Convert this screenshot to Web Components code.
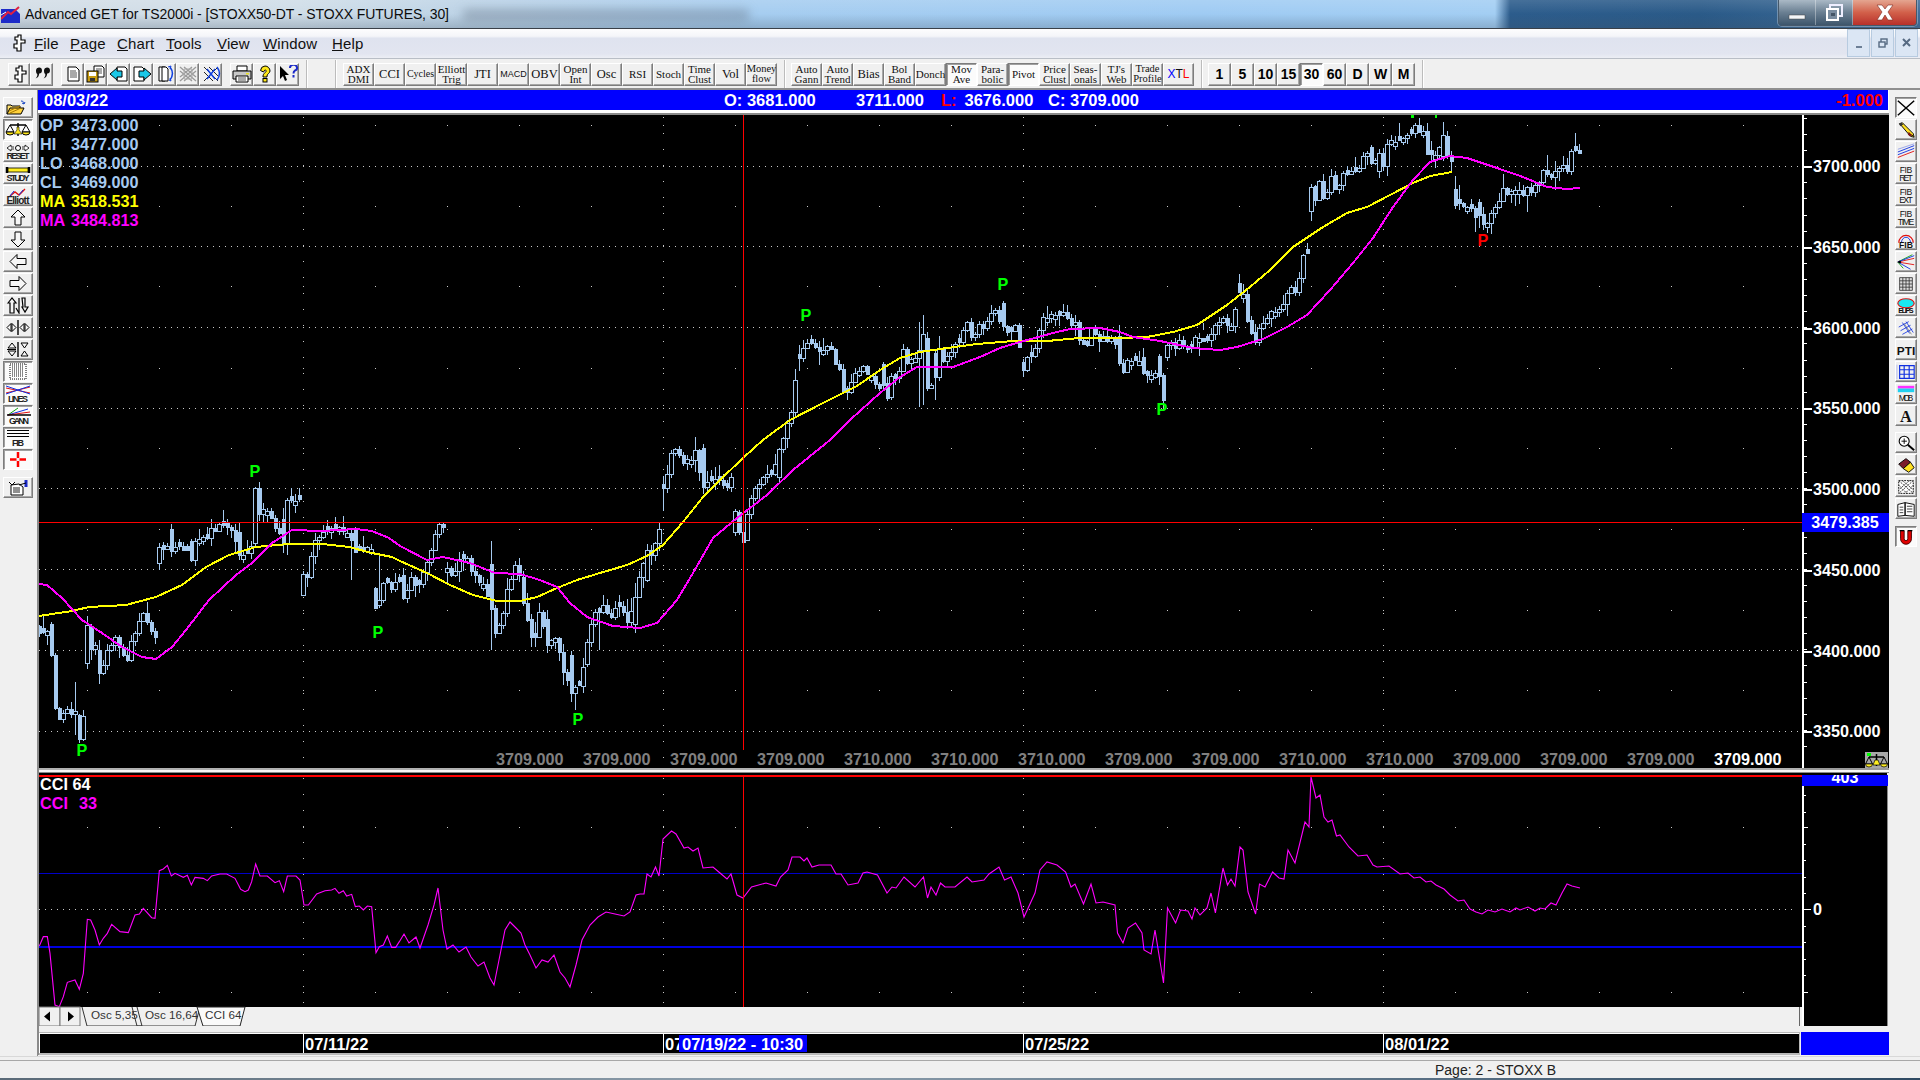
<![CDATA[<!DOCTYPE html>
<html><head><meta charset="utf-8"><title>Advanced GET</title>
<style>
html,body{margin:0;padding:0;background:#f0f0f0}
body{width:1920px;height:1080px;overflow:hidden;font-family:"Liberation Sans",Arial,sans-serif}
</style></head><body>
<app-window>
  <title-bar slot="top">Advanced GET for TS2000i - [STOXX50-DT - STOXX FUTURES, 30]</title-bar>
  <menu-bar slot="top"></menu-bar>
  <top-toolbar slot="top"></top-toolbar>
  <side-bar slot="left" side="left"></side-bar>
  <quote-header slot="center"></quote-header>
  <price-chart slot="center"></price-chart>
  <osc-chart slot="center"></osc-chart>
  <date-bar slot="center"></date-bar>
  <side-bar slot="right" side="right"></side-bar>
  <status-bar slot="bottom">Page: 2 - STOXX B</status-bar>
</app-window>
<script>
const S=(b,w=24,h=18)=>`<svg xmlns="http://www.w3.org/2000/svg" width="${w}" height="${h}" viewBox="0 0 ${w} ${h}" style="display:block;font-family:'Liberation Sans',sans-serif">${b}</svg>`;
const APPSHAPE='<path d="M10 1h3v5h4v3h-4v8h-4v-3H6v-4h3V6H7V3h3z" fill="#fff" stroke="#000" stroke-width="1.2"/>';
class AppWindow extends HTMLElement{constructor(){super();this.attachShadow({mode:'open'}).innerHTML=`<style>
:host{display:flex;flex-direction:column;width:1920px;height:1080px;background:#f0f0f0}
.mid{display:flex;height:966px;flex:none}
.l{width:37px;flex:none;border-right:1px solid #8a8a8a}
.c{width:1851px;flex:none;display:flex;flex-direction:column}
.r{flex:1}
.edge{height:2px;background:linear-gradient(90deg,#5a6a78,#8fa0ae 40%,#2f4a63)}
</style><slot name="top"></slot><div class="mid"><div class="l"><slot name="left"></slot></div><div class="c"><slot name="center"></slot></div><div class="r"><slot name="right"></slot></div></div><slot name="bottom"></slot><div class="edge"></div>`}}
class TitleBar extends HTMLElement{constructor(){super();this.attachShadow({mode:'open'}).innerHTML=`<style>
:host{display:flex;align-items:center;height:28px;border-bottom:1px solid #3a4048;position:relative;overflow:hidden;
background:linear-gradient(180deg,rgba(255,255,255,.12),rgba(255,255,255,0) 50%,rgba(60,80,100,.25) 100%),linear-gradient(90deg,#d3dde6 0,#cfdde8 300px,#bdd3e6 460px,#a6cdf0 760px,#9fcbf3 1200px,#a3cef3 1495px,#2c5c8c 1510px,#2a5a88 1700px,#3f6d9a 1920px)}
.smudge{position:absolute;left:462px;top:9px;width:288px;height:12px;background:rgba(105,120,135,.42);filter:blur(5px);border-radius:6px}
.logo{margin:0 4px 0 1px;flex:none}
.t{font:14px "Liberation Sans",sans-serif;color:#0c0c0c;white-space:nowrap;letter-spacing:-.1px;position:relative}
.ctl{position:absolute;right:3px;top:0;height:25px;display:flex;border:1px solid #46596b;border-top:0;border-radius:0 0 4px 4px;overflow:hidden;box-shadow:0 0 0 1px rgba(255,255,255,.3)}
.ctl div{display:flex;align-items:center;justify-content:center;border-right:1px solid rgba(255,255,255,.35)}
.mn,.mx{width:36px;background:linear-gradient(180deg,#aab9c6,#6a7f92 50%,#3e566c)}
.cl{width:63px;background:linear-gradient(180deg,#e4a590,#d2604a 50%,#b8302a);border-right:0!important}
</style><div class="smudge"></div>
<div class="logo">${S('<path d="M0 4h14l5 5v9H0z" fill="#1c2ac8"/><path d="M0 14L7 7l3 2 8-7" fill="none" stroke="#e02040" stroke-width="2"/><path d="M0 10l5-3" stroke="#fff"/>',20,18)}</div>
<div class="t"><slot></slot></div>
<div class="ctl"><div class="mn">${S('<rect x="2" y="11" width="16" height="4" fill="#f4f6f8" stroke="#444" stroke-width=".5"/>',20,18)}</div>
<div class="mx">${S('<rect x="6" y="2" width="12" height="11" fill="none" stroke="#eef" stroke-width="2"/><rect x="3" y="6" width="11" height="11" fill="#7a8da0" stroke="#fff" stroke-width="2"/><rect x="7" y="10" width="4" height="3" fill="#456"/>',20,20)}</div>
<div class="cl">${S('<path d="M3 2h5l3 4 3-4h5l-5 7 5 8h-5l-3-5-3 5H3l5-8z" fill="#fff" stroke="#7a2a20" stroke-width=".6"/>',22,20)}</div></div>`}}
class MenuBar extends HTMLElement{constructor(){super();
const items=[['F','ile',34],['P','age',70],['C','hart',117],['T','ools',166],['V','iew',217],['W','indow',263],['H','elp',332]];
const h=`<style>
:host{display:flex;align-items:center;height:28px;padding-bottom:1px;border-bottom:1px solid #b9bec6;position:relative;background:linear-gradient(180deg,#fdfdfe 0,#f4f5f9 25%,#dfe3ef 32%,#e2e5f0 85%,#eceef4)}
.i{font:15px "Liberation Sans",sans-serif;color:#111;letter-spacing:.15px;position:absolute;top:6px}
u{text-decoration-thickness:1px}
.logo{margin-left:8px}
.mdi{margin-left:auto;margin-right:2px;display:flex;gap:1px}
.mdi div{width:21px;height:26px;background:#dbe6f4;border:1px solid #b7cbe0;display:flex;align-items:center;justify-content:center}
</style><div class="logo">${S(APPSHAPE,22,18)}</div>
${items.map(([a,b,x])=>`<span class="i" style="left:${x}px"><u>${a}</u>${b}</span>`).join('')}
<div class="mdi"><div>${S('<rect x="3" y="10" width="6" height="2" fill="#6c7f96"/>',12,14)}</div>
<div>${S('<rect x="4" y="3" width="6" height="5" fill="none" stroke="#566a82" stroke-width="1.4"/><rect x="2" y="6" width="6" height="5" fill="#dbe6f4" stroke="#566a82" stroke-width="1.4"/>',12,14)}</div>
<div>${S('<path d="M2 3l7 7M9 3l-7 7" stroke="#566a82" stroke-width="2"/>',12,14)}</div></div>`;
this.attachShadow({mode:'open'}).innerHTML=h}}
class ToolBtn extends HTMLElement{constructor(){super();this.attachShadow({mode:'open'}).innerHTML=`<style>
:host{display:flex;box-sizing:border-box;align-items:center;justify-content:center;overflow:hidden;flex:none;
background:#f0f0f0;border:1px solid;border-color:#fff #7d7d7d #7d7d7d #fff;box-shadow:inset -1px -1px 0 #a8a8a8;
font:11px/10.5px "Liberation Serif",serif;color:#111;text-align:center;white-space:pre-line}
:host([pressed]){border-color:#7d7d7d #fff #fff #7d7d7d;box-shadow:inset 1px 1px 0 #a0a0a0;background:#fbfbfb}
:host([num]){font:bold 14px "Liberation Sans",sans-serif;color:#000}
</style><slot></slot>`}}
class TopToolbar extends HTMLElement{constructor(){super();
const i={
a:S(APPSHAPE,20,18),
q:S('<path d="M4 5a3 3 0 1 1 3.2 3.4C7 11 6 12.500 3.500 13.500 5 12 5.500 10.500 5.300 9 4.300 8.800 4 7 4 5zM12 5a3 3 0 1 1 3.200 3.400C15 11 14 12.500 11.500 13.500 13 12 13.500 10.500 13.300 9 12.300 8.800 12 7 12 5z" fill="#111"/>',20,18),
n:S('<path d="M5 2h8l3 3v11H5z" fill="#fff" stroke="#000"/><path d="M7 6h6M7 8h7M7 10h7M7 12h7" stroke="#555"/>',20,18),
s:S('<path d="M8 1h8l2 2v9H8z" fill="#fff" stroke="#000"/><path d="M10 4h6M10 6h6M10 8h6" stroke="#555"/><rect x="1" y="6" width="11" height="11" fill="#c69a10" stroke="#000"/><rect x="3" y="7" width="7" height="4" fill="#fff"/><rect x="4" y="13" width="5" height="3" fill="#333"/>',20,18),
l:S('<path d="M8 2h8l2 2v12H8z" fill="#fff" stroke="#000"/><path d="M1 9l7-6v3h5v6H8v3z" fill="#19c8e8" stroke="#000"/>',20,18),
r:S('<path d="M2 2h8l2 2v12H2z" fill="#fff" stroke="#000"/><path d="M19 9l-7-6v3H7v6h5v3z" fill="#19c8e8" stroke="#000"/>',20,18),
c:S('<path d="M4 2h6v14H4z" fill="#fff" stroke="#000"/><path d="M7 2h4l2 2v12H7z" fill="#fff" stroke="#000"/><path d="M15 2c3 4 3 9 0 13" fill="none" stroke="#1040e0" stroke-width="1.500"/><path d="M13 2l3-1-1 3M14 15l2 1-1-3" stroke="#1040e0" fill="none"/>',20,18),
g:S('<path d="M2 2l16 14M18 2L2 16M2 6l12 10M6 2l12 10M18 6L6 16M14 2L2 12" stroke="#9a9a9a" stroke-width="1.300"/><path d="M6 4h8v10H6z" fill="none" stroke="#aaa"/>',20,18),
x:S('<path d="M3 2l14 14M17 2L3 16M3 7l9 9M8 2l9 9" stroke="#222" stroke-width="1"/><path d="M16 2c3 4 3 9 0 13M6 4l8 10M14 4L6 14" fill="none" stroke="#1040e0" stroke-width="1.500"/>',20,18),
p:S('<path d="M5 1h10v5H5z" fill="#fff" stroke="#000"/><path d="M1 6h18v8H1z" fill="#c8c8c8" stroke="#000"/><path d="M4 11h12v6H4z" fill="#fff" stroke="#000"/><path d="M6 13h8M6 15h8" stroke="#555"/><rect x="14" y="8" width="3" height="1.500" fill="#e8e020"/>',20,18),
h:S('<path d="M10 1a5 5 0 0 1 5 5c0 2-3 3-3 5v1H8v-1c0-2 2-3 3-4.500 .6-1-.4-1.800-1.300-1.300L8.500 7 5.500 5.500A5 5 0 0 1 10 1z" fill="#ffe81a" stroke="#000"/><rect x="8" y="13.500" width="4" height="3.500" fill="#ffe81a" stroke="#000"/>',20,18),
w:S('<path d="M2 1v13l3-3 2 5 2-1-2-5h4z" fill="#000"/><path d="M12 3a3.500 3 0 1 1 5 2.500c-1.500 1-1.500 1.500-1.500 3M15.500 10v2.500" fill="none" stroke="#1c2ac8" stroke-width="2"/>',20,18)};
const g2=['n','s','l','r','c','g','x'],g3=['p','h','w'];
const st=['ADX\nDMI','CCI','Cycles','Elliott\nTrig','JTI','MACD','OBV','Open\nInt','Osc','RSI','Stoch','Time\nClust','Vol','Money\nflow'];
const st2=['Auto\nGann','Auto\nTrend','Bias','Bol\nBand','Donch','Mov\nAve','Para-\nbolic','Pivot','Price\nClust','Seas-\nonals',"TJ's\nWeb",'Trade\nProfile','XTL'];
const per=['1','5','10','15','30','60','D','W','M'];
const sb=(t,extra='')=>`<tool-btn ${extra} style="width:31px;height:23px;${t==='CCI'||t==='JTI'||t==='OBV'||t==='Osc'||t==='Vol'||t==='Bias'?'font-size:12.5px;':''}${t==='MACD'?'font-size:9px;font-family:Liberation Sans,sans-serif;':''}${t==='Cycles'?'font-size:10px;':''}${t==='Money\nflow'||t==='Trade\nProfile'?'font-size:10.5px;':''}">${t==='XTL'?'<span style="font:12px Liberation Sans,sans-serif"><span style="color:#00f">X</span>T<span style="color:#f00">L</span></span>':t}</tool-btn>`;
const ib=(k,w=23)=>`<tool-btn style="width:${w}px;height:23px">${i[k]}</tool-btn>`;
this.attachShadow({mode:'open'}).innerHTML=`<style>
:host{display:flex;align-items:flex-start;padding-top:4px;box-sizing:border-box;background:#f0f0f0;border-bottom:2px solid #8f8f8f;height:32px;padding-left:8px}
.g{display:flex}
.sep{width:1px;height:28px;margin-top:-3px;background:#bcbcbc;box-shadow:1px 0 0 #fff;flex:none}
</style>
<div class="g">${ib('a',22)}${ib('q',23)}</div><div style="width:8px"></div>
<div class="g">${g2.map(k=>ib(k)).join('')}</div><div style="width:8px"></div>
<div class="g">${g3.map(k=>ib(k)).join('')}</div><div style="width:7px"></div><div class="sep"></div><div style="width:28px"></div><div class="sep"></div><div style="width:7px"></div>
<div class="g">${st.map(t=>sb(t)).join('')}</div><div style="width:7px"></div><div class="sep"></div><div style="width:6px"></div>
<div class="g">${st2.map(t=>sb(t,(t==='Mov\nAve'||t==='Pivot')?'pressed':'')).join('')}</div><div style="width:7px"></div><div class="sep"></div><div style="width:6px"></div>
<div class="g">${per.map(t=>`<tool-btn num ${t==='30'?'pressed':''} style="width:23px;height:23px">${t}</tool-btn>`).join('')}</div><div style="width:7px"></div><div class="sep"></div>`}}
const LI={
open:S('<path d="M2 15V6h4l1 1h8v3" fill="#ffe070" stroke="#000"/><path d="M2 15l3-6h14l-3 6z" fill="#ffd23c" stroke="#000"/><path d="M4 12l11-5M5 14l11-5" stroke="#a87800"/><path d="M16 2c2 0 3 1 3 3M19 5l-2-1M19 5l1-2" stroke="#1040c0" fill="none"/>',26,17),
scales:S('<path d="M13 2v13M5 4h16" stroke="#000" stroke-width="1.400"/><path d="M9 13h8l-3-4v-3h-2v3z" fill="#ffe81a" stroke="#000" stroke-width=".6"/><path d="M5 4l-4 7h8zM21 4l-4 7h8z" fill="none" stroke="#000"/><path d="M1 11a4 3 0 0 0 8 0zM17 11a4 3 0 0 0 8 0z" fill="#ffe81a" stroke="#000"/>',26,17),
reset:S('<path d="M2 5l4-3v2h3M2 5l4 3V6h3M24 5l-4-3v2h-3M24 5l-4 3V6h-3" fill="#fff" stroke="#000" stroke-width=".8"/><circle cx="13" cy="5" r="2.500" fill="#fff" stroke="#000"/><text x="13" y="16" font-size="9" font-weight="bold" text-anchor="middle" fill="#222" textLength="23">RESET</text>',26,17),
study:S('<path d="M2 2v6M24 2v6" stroke="#000" stroke-width="2.500"/><rect x="3" y="3" width="20" height="4" fill="#ffee20" stroke="#000" stroke-width=".8"/><text x="13" y="16" font-size="9" font-weight="bold" text-anchor="middle" fill="#222" textLength="23">STUDY</text>',26,17),
elliott:S('<path d="M5 9l5-4 4 3 6-6" fill="none" stroke="#e01010" stroke-width="1.400"/><path d="M5 9l4-5M14 8l4-5" stroke="#1030e0"/><text x="13" y="16.500" font-size="10" font-weight="bold" text-anchor="middle" fill="#222" textLength="23">Elliott</text>',26,17),
up:S('<path d="M13 1l7 7h-4v8h-6V8H6z" fill="#f6f6f6" stroke="#000"/>',26,17),
down:S('<path d="M13 16l7-7h-4V1h-6v8H6z" fill="#f6f6f6" stroke="#000"/>',26,17),
left:S('<path d="M5 8.500l7-7v4h9v6h-9v4z" fill="#f6f6f6" stroke="#000"/>',26,17),
right:S('<path d="M21 8.500l-7-7v4H5v6h9v4z" fill="#f6f6f6" stroke="#000"/>',26,17),
flip:S('<path d="M3 6l4-5 4 5H9v10H5V6z" fill="#f6f6f6" stroke="#000" stroke-width="1.200"/><path d="M11 11l3 5V1" fill="none" stroke="#000" stroke-width="1.200"/><path d="M17 1h3v9h3l-3 5-3-5h1z" fill="none" stroke="#000" stroke-width="1.200"/>',26,17),
zoomx:S('<path d="M13 1v15" stroke="#000" stroke-width="1.400"/><path d="M2 8.500l4-4v8zM11 8.500l-4-4v8zM15 8.500l4-4v8zM24 8.500l-4-4v8z" fill="#f6f6f6" stroke="#000"/>',26,17),
zoomy:S('<path d="M13 1v15" stroke="#000" stroke-width="1.400"/><path d="M3 7l4-5 4 5zM3 10l4 5 4-5z" fill="#f6f6f6" stroke="#000"/><path d="M16 2h7l-3.500 5zM16 15h7l-3.500-5z" fill="#f6f6f6" stroke="#000"/><path d="M2 8.500h9" stroke="#000"/>',26,17),
grid:S('<rect x="5" y="1" width="16" height="15" fill="#fff" stroke="#000" stroke-dasharray="1 1"/><path d="M7 3h12M7 5h12M7 7h12M7 9h12M7 11h12M7 13h12" stroke="#111" stroke-dasharray="1 1"/>',26,17),
lines:S('<path d="M1 3l24 5M1 8l24-6" stroke="#e01010" stroke-width="1"/><path d="M1 1l24 8M1 9l24-8" stroke="#1030e0"/><text x="13" y="16.500" font-size="9" font-weight="bold" text-anchor="middle" fill="#222" textLength="20">LINES</text>',26,17),
gann:S('<path d="M3 8L13 1" stroke="#10a010"/><path d="M3 8l20-6" stroke="#1030e0"/><path d="M3 8l22-3" stroke="#e01010"/><path d="M2 8h24" stroke="#000" stroke-width="1.500"/><text x="14" y="16.500" font-size="9" font-weight="bold" text-anchor="middle" fill="#222" textLength="20">GANN</text>',26,17),
fib:S('<path d="M2 1.500h22M2 4.500h22M2 7.500h22" stroke="#000" stroke-width="1.200"/><text x="13" y="16.500" font-size="9" font-weight="bold" text-anchor="middle" fill="#222" textLength="12">FIB</text>',26,17),
cross:S('<path d="M13 1v15M5 8.500h16" stroke="#f00" stroke-width="2.500"/><rect x="11.500" y="7" width="3" height="3" fill="#f0f0f0"/>',26,17),
doc:S('<path d="M6 6l8-1 4 3v8H6z" fill="#fff" stroke="#000"/><path d="M8 9h7M8 11h7M8 13h7" stroke="#222"/><path d="M4 3l3 3 3-3" fill="#fff" stroke="#000"/><path d="M21 1v7" stroke="#1c2ac8" stroke-width="3"/><path d="M14 6l7-2" stroke="#000"/>',26,17),
xx:S('<path d="M2 1l18 16M20 1L2 17" stroke="#000" stroke-width="1.600"/>',22,18),
pencil:S('<path d="M4 2l3-1 12 12 1 4-4-1z" fill="#ffe020" stroke="#000"/><path d="M3 2l3-1 2 2-3 2z" fill="#333"/><path d="M17 14l2 2" stroke="#000"/><path d="M14 11l4 4-3 1-2-2z" fill="#7a1a1a"/>',22,18),
rl:S('<path d="M2 9L20 2M2 12L20 5" stroke="#1030e0"/><path d="M2 15L20 8" stroke="#e01010"/><path d="M2 6L20 0" stroke="#1030e0" opacity=".4"/>',22,18),
fibret:S('<text x="11" y="8" font-size="9.5" text-anchor="middle" fill="#111" textLength="14">FIB</text><text x="11" y="17" font-size="9.5" text-anchor="middle" fill="#111" textLength="15">RET</text>',22,18),
fibext:S('<text x="11" y="8" font-size="9.5" text-anchor="middle" fill="#111" textLength="14">FIB</text><text x="11" y="17" font-size="9.5" text-anchor="middle" fill="#111" textLength="15">EXT</text>',22,18),
fibtime:S('<text x="11" y="8" font-size="9.5" text-anchor="middle" fill="#111" textLength="14">FIB</text><text x="11" y="17" font-size="9.5" text-anchor="middle" fill="#111" textLength="18">TIME</text>',22,18),
arc:S('<path d="M3 12a8 8 0 0 1 16 0" fill="none" stroke="#e01010" stroke-width="1.300"/><path d="M6 12a5 6 0 0 1 10 0" fill="none" stroke="#1030e0"/><text x="11" y="17.500" font-size="9.500" font-weight="bold" text-anchor="middle" fill="#111">FIB</text>',22,18),
fan:S('<path d="M2 9L18 1" stroke="#10a010"/><path d="M2 9L20 5M2 9L20 12" stroke="#e01010"/><path d="M2 9L16 17M2 9L20 2" stroke="#1030e0"/><path d="M2 9l6 7" stroke="#10a010"/><circle cx="4" cy="9" r="1.500" fill="#000"/>',22,18),
gridR:S('<path d="M4 2h14v14H4zM4 5.500h14M4 9h14M4 12.500h14M7.500 2v14M11 2v14M14.500 2v14" fill="#ddd" stroke="#333" stroke-width=".9"/>',22,18),
elips:S('<ellipse cx="11" cy="6" rx="9" ry="5" fill="#18e8f0" stroke="#e01010" stroke-width="1.200"/><text x="11" y="17" font-size="8" font-weight="bold" text-anchor="middle" fill="#111" textLength="17">ELIPS</text>',22,18),
cl:S('<path d="M3 8L14 2M5 12L16 6M7 16L18 10M7 3l8 12M11 2l8 12" stroke="#1030e0" stroke-width=".9"/><path d="M9 4l8 12" stroke="#666" stroke-width=".7"/>',22,18),
pti:S('<text x="11" y="14" font-size="13" font-weight="bold" text-anchor="middle" fill="#111">PTI</text>',22,18),
blue:S('<path d="M4 2h16v14H4zM4 6.500h16M4 11.500h16M9 2v14M14.500 2v14" fill="none" stroke="#1030e0" stroke-width="1.300"/><path d="M1 1v16" stroke="#1030e0" opacity=".3"/>',22,18),
mob:S('<rect x="2" y="0" width="18" height="3" fill="#ff30ff"/><rect x="2" y="3" width="18" height="4" fill="#20d0f0"/><text x="11" y="17" font-size="9.500" text-anchor="middle" fill="#111" textLength="16">MOB</text>',22,18),
A:`<svg width="22" height="18" viewBox="0 0 22 18" style="display:block"><text x="11" y="16" font-size="18" font-weight="bold" font-family="Liberation Serif,serif" text-anchor="middle" fill="#111">A</text></svg>`,
zoom:S('<circle cx="9" cy="7" r="5.500" fill="#fff" stroke="#000" stroke-width="1.200"/><path d="M9 4v6M6 7h6" stroke="#000"/><path d="M13 11l7 6" stroke="#000" stroke-width="2.200"/>',22,18),
eraser:S('<path d="M3 8l8-6 5 4-8 7z" fill="#7a1a2a" stroke="#000"/><path d="M8 13l8-7 4 6-6 5z" fill="#ffe020" stroke="#000"/>',22,18),
pat:S('<rect x="3" y="2" width="16" height="14" fill="#fff" stroke="#000" stroke-dasharray="2 1"/><path d="M3 2l16 14M19 2L3 16M7 2l12 10M15 2L3 12M3 7l9 9M19 7l-9 9" stroke="#333" stroke-dasharray="2 1"/>',22,18),
rdoc:S('<path d="M2 4l8-2v14l-8 1zM10 2l10 2v13l-10-1z" fill="#fff" stroke="#000"/><path d="M4 7h4M4 10h4M4 13h4M12 6h6M12 9h6M12 12h6" stroke="#333"/>',22,18),
U:S('<path d="M5 2v9a6 6 0 0 0 12 0V2h-4v9a2 2 0 0 1-4 0V2z" fill="#e00000" stroke="#400"/><path d="M4 2h5M13 2h5" stroke="#000" stroke-width="1.500"/>',22,18)};
class SideBar extends HTMLElement{constructor(){super();
const left=[['open'],['scales',1],['reset'],['study'],['elliott'],['up'],['down'],['left'],['right'],['flip'],['zoomx'],['zoomy'],['grid',1],['lines',1],['gann',1],['fib',1],['cross',1],['doc',0,6]];
const right=[['xx',1],['pencil'],['rl'],['fibret'],['fibext'],['fibtime'],['arc'],['fan'],['gridR'],['elips'],['cl'],['pti'],['blue'],['mob'],['A'],['zoom',0,5],['eraser'],['pat'],['rdoc'],['U',1,6]];
const isL=this.getAttribute('side')==='left';
const list=isL?left:right;
this.attachShadow({mode:'open'}).innerHTML=`<style>
:host{display:flex;flex-direction:column;gap:1px;padding-top:7px;padding-left:${isL?3:6}px}
</style>${list.map(([k,p,m])=>`<tool-btn ${p?'pressed':''} style="width:${isL?30:22}px;height:21px;${m?`margin-top:${m}px`:''}">${LI[k]}</tool-btn>`).join('')}`}}
class QuoteHeader extends HTMLElement{constructor(){super();this.attachShadow({mode:'open'}).innerHTML=`<style>
:host{display:flex;align-items:flex-start;box-sizing:border-box;height:25px;border-bottom:2px solid #8a8a8a;background:#fff;flex:none;font:bold 16.5px "Liberation Sans",sans-serif;color:#fff}
.b{display:flex;align-items:center;background:#00f;height:20px;width:1850px;white-space:nowrap;padding-top:1px;box-sizing:border-box}
span{flex:none}
.red{color:#f00}
</style><div class="b"><span style="width:686px;padding-left:6px;box-sizing:border-box">08/03/22</span><span style="width:132px">O: 3681.000</span><span style="width:85px">3711.000</span><span class="red" style="width:23.500px">L:</span><span style="width:83.500px">3676.000</span><span style="width:1px;flex:1">C: 3709.000</span><span class="red" style="padding-right:5px">-1.000</span></div>`}}
/* ---------- data in page coordinates ---------- */
const PX=[[39,630],[46,627],[51,650],[55,707],[60,720],[67,710],[76,713],[81,737],[87,627,1],[92,627],[95,647],[99,672],[104,660],[109,647],[115,640],[121,655],[127,658],[132,640],[137,627],[144,615],[147,618],[152,633],[156,635],[159,557,1],[164,543],[171,550],[179,543],[184,548],[191,558],[196,540],[202,540],[211,530],[219,525],[226,523],[232,528],[239,553],[244,560],[251,545],[256,488,1],[259,513],[266,510],[271,520],[276,527],[284,543],[287,500,1],[292,497],[299,500],[303,593,1],[307,573],[311,557],[316,537],[322,530],[332,527],[339,530],[347,533],[356,550],[364,553],[371,547],[376,608,1],[381,593],[386,577],[391,587],[399,578],[403,597],[410,580],[417,587],[423,573],[430,553],[435,535],[442,520],[447,565,1],[452,582],[458,555],[468,555],[472,575],[480,580],[492,608],[497,632],[503,615],[508,582],[515,568],[522,577],[523,603],[527,620],[532,637],[537,637],[539,615],[547,643],[555,637],[560,660],[563,673],[572,693],[578,688],[583,667],[588,643],[592,618],[598,612],[603,602],[610,617],[615,608],[620,605],[628,622],[635,597],[639,577],[647,552],[652,553],[658,537],[663,487,1],[667,473],[671,453],[678,450],[685,465],[695,450],[703,487],[712,475],[720,483],[728,490],[732,475],[737,532,1],[745,540],[748,515],[752,498],[757,487],[763,480],[770,477],[780,450],[783,440],[788,415],[792,410],[796,370,1],[802,350],[808,337],[815,350],[825,345],[833,355],[840,372],[845,398],[852,380],[863,367],[872,380],[882,392],[888,398],[892,377],[897,377],[903,350],[908,365],[917,353],[923,338],[928,388],[935,377],[940,347],[943,362],[952,352],[960,338],[967,325],[972,335],[980,325],[983,330],[988,317],[995,313],[1003,325],[1008,330],[1015,323],[1018,343],[1023,370,1],[1027,360],[1032,352],[1037,342],[1040,322],[1045,315],[1053,312],[1063,315],[1072,327],[1076,325],[1080,342],[1087,345],[1092,322],[1097,340],[1107,338],[1113,338],[1118,362],[1123,368],[1128,358],[1138,357],[1145,372],[1152,373],[1158,375],[1163,400],[1167,345,1],[1172,340],[1175,352],[1180,342],[1190,347],[1195,338],[1202,343],[1208,340],[1215,328],[1222,312],[1227,322],[1233,322],[1238,283,1],[1243,291],[1247,320],[1252,333],[1257,342],[1260,322],[1267,320],[1272,312],[1280,310],[1286,290],[1291,290],[1295,293],[1300,273],[1303,252],[1307,250],[1312,187,1],[1315,198],[1320,182],[1323,197],[1328,194],[1332,175],[1337,190],[1343,175],[1352,170],[1357,172],[1363,158],[1367,150],[1372,163],[1378,163],[1384,170],[1387,143],[1392,138],[1397,145],[1403,137],[1410,138],[1415,127],[1423,135],[1428,160],[1433,153],[1438,152],[1443,137],[1448,157],[1452,157],[1455,205,1],[1460,200],[1467,207],[1475,215],[1480,223],[1485,222],[1490,215],[1498,200],[1503,192],[1508,198],[1515,188],[1519,188],[1523,195],[1528,187],[1532,195],[1536,183],[1543,173],[1552,173],[1558,175],[1562,163],[1567,167],[1570,150],[1575,149],[1580,152]];
/* explicit big bodies read from the reference: x:[top,bottom,filled] */
const OV={51:[624,655,1],55:[655,708,1],79:[715,739,1],83:[716,739,0],87:[625,663,0],91:[627,649,1],99:[650,673,1],159:[547,563,0],171:[529,551,1],191:[541,560,1],239:[532,555,1],255:[488,543,0],259:[488,514,1],283:[519,543,1],287:[500,544,0],303:[574,595,0],355:[530,552,1],375:[588,608,1],403:[575,598,1],491:[564,609,1],495:[608,633,1],523:[577,603,1],527:[603,620,1],531:[619,637,1],547:[619,645,1],571:[655,693,1],583:[667,686,0],587:[642,664,0],635:[597,624,0],639:[577,597,0],647:[550,580,0],703:[448,487,1],735:[511,532,0],739:[512,532,1],747:[514,540,0],751:[498,514,0],779:[449,477,0],883:[364,385,1],887:[383,398,1],891:[376,397,0],927:[338,388,1],935:[353,377,1],1003:[303,326,1],1023:[362,370,1],1119:[336,363,1],1143:[357,373,1],1159:[356,376,1],1163:[375,400,1],1167:[345,357,0],1239:[283,292,1],1247:[294,321,1],1251:[320,333,1],1255:[332,342,1],1285:[288,312,0],1311:[187,211,0],1315:[186,200,1],1335:[175,189,1],1371:[147,163,1],1379:[153,171,0],1429:[135,161,1],1443:[135,156,0],1447:[136,156,1],1455:[189,205,1],1479:[202,215,1],1483:[214,224,1]};
const YEL=[[39,616],[72,611],[89,607],[126,605],[156,597],[182,585],[206,567],[229,555],[256,547],[289,544],[322,544],[349,547],[372,553],[392,557],[400,561],[427,573],[450,585],[473,595],[497,601],[520,601],[537,597],[557,588],[577,580],[600,573],[627,565],[647,556],[663,545],[683,522],[703,497],[720,480],[743,458],[763,440],[790,420],[825,402],[857,386],[880,370],[900,358],[920,352],[947,348],[977,344],[1013,341],[1047,341],[1080,338],[1120,338],[1147,337],[1173,332],[1197,325],[1227,305],[1250,287],[1270,270],[1293,247],[1323,227],[1347,213],[1367,207],[1390,195],[1413,183],[1430,176],[1452,172]];
const MAG=[[39,584],[47,585],[62,598],[82,620],[102,633],[122,647],[142,657],[156,659],[172,647],[186,630],[209,600],[236,575],[252,563],[272,543],[292,530],[322,531],[356,529],[372,531],[389,538],[400,546],[427,560],[443,557],[470,563],[495,573],[520,574],[540,580],[557,587],[570,603],[587,617],[613,626],[640,628],[657,623],[677,600],[693,573],[713,538],[737,518],[767,495],[793,470],[830,440],[850,420],[880,393],[900,377],[917,367],[953,367],[980,357],[1000,348],[1020,342],[1053,333],[1070,329],[1100,328],[1120,332],[1133,337],[1160,341],[1193,348],[1220,350],[1237,347],[1263,339],[1287,327],[1307,315],[1330,290],[1353,263],[1373,238],[1393,207],[1413,180],[1430,162],[1450,156],[1467,158],[1497,168],[1523,177],[1547,187],[1567,189],[1580,188]];
const CCI_Z6=[[118,618],[130,590],[142,590],[150,640],[165,795],[178,800],[190,770],[202,727],[225,720],[238,748],[250,700],[262,538],[272,540],[285,570],[298,615],[310,595],[322,580],[335,553],[360,575],[385,578],[405,525],[418,522],[430,505],[455,533],[465,535],[478,392],[490,387],[502,376],[514,408],[525,400],[550,412],[562,406],[574,435],[585,412],[610,415],[622,422],[635,408],[660,402],[680,402],[705,415],[722,448],[735,455],[745,450],[755,425],[767,372],[780,408],[802,408],[825,428],[838,422],[851,455],[862,408],[888,408],[900,420],[912,495],[925,495],[950,462],[975,452],[995,450],[1005,445],[1017,460],[1030,452],[1040,468],[1055,463],[1066,500],[1078,498],[1090,510],[1102,498],[1115,500],[1128,638],[1138,620],[1150,615],[1162,588],[1175,622],[1187,622],[1198,605]].map(([x,y])=>[x/3,740+y/3]);
const CCI=CCI_Z6.concat([[404,934],[409,943],[416,937],[420,948],[428,925],[434,905],[438,888],[443,930],[447,949],[453,945],[459,952],[466,947],[471,957],[478,966],[484,962],[490,978],[494,985],[499,960],[505,930],[510,922],[516,928],[521,933],[525,945],[530,955],[536,968],[542,960],[548,962],[554,955],[560,972],[565,978],[570,987],[576,965],[582,940],[590,925],[598,917],[606,912],[615,914],[624,916],[630,912],[636,895],[640,894],[644,894],[647,874],[651,877],[655.5,867],[659,876],[663,839],[671.5,831],[676,834],[684,848],[688,847],[693,851],[698,848],[703,868],[713,867],[720,873],[727,879],[731,874],[737,895],[743,898],[751.5,887],[766,883],[776,886],[780.5,877],[788,870],[792,857],[800,857],[804,861],[807,858],[812,867],[819,865],[831,865],[836,874],[841,874],[848,885],[858,883],[863,873],[867,872],[877.5,875],[887,893],[892,887],[896,888],[904,877],[915,887],[923.5,877],[927.5,898],[931,887],[936,895],[940.5,883],[945,887],[955,887],[967,877],[972,882],[984,880],[989,874],[999,867],[1004.5,880],[1011,877],[1018,893],[1024,917],[1035,893],[1040,870],[1047,862],[1057,865],[1065.6,872],[1071,887],[1075,884],[1083.5,904],[1091,884],[1096,903],[1103,902],[1115,905],[1117.5,933],[1123,943],[1128,928],[1135.5,923],[1142,933],[1144,950],[1151,954],[1155,930],[1163.5,983],[1167.5,908],[1175.6,923],[1180.5,910],[1188,911],[1192,919],[1195,908],[1200,915],[1207,908],[1211,893],[1215.4,913],[1223,868],[1227.5,885],[1231,879],[1235,886],[1240,847],[1243,850],[1248,892],[1255.6,914],[1259.5,884],[1265,887],[1272.6,872],[1279,878],[1284,879],[1288,850],[1295,863],[1305,822],[1309,827],[1311,777],[1316,798],[1320,795],[1324,817],[1328,822],[1332,820],[1336.5,836],[1340,835],[1349,847],[1358,856],[1367,855],[1373,865],[1377,867],[1389,866],[1400,874],[1408,873],[1414,878],[1420,877],[1426,882],[1431,881],[1436,885],[1444,889],[1450,895],[1458,901],[1464,900],[1470,909],[1476,912],[1482,914],[1488,910],[1495,912],[1502,909],[1510,912],[1516,908],[1520,910],[1528,907],[1535,911],[1540,908],[1545,909],[1551,903],[1556,905],[1562,893],[1567,884],[1572,886],[1580,888]]);
const pts=a=>a.map(p=>p[0]+','+p[1]).join(' ');
function candles(){let s=1234567;const r=()=>{s=(s*16807)%2147483647;return s/2147483647};
 for(let i=0;i<8;i++)r();
 const at=x=>{for(let i=1;i<PX.length;i++){if(x<=PX[i][0]){const[a,b]=[PX[i-1],PX[i]];return a[1]+(b[1]-a[1])*(x-a[0])/(b[0]-a[0])}}return PX[PX.length-1][1]};
 const longs={75:[682,735],259:[482,null],491:[541,650],923:[315,405],919:[322,407],663:[null,511],575:[null,710],1163:[null,409],935:[null,400],1443:[122,null],1379:[null,178],1387:[null,176],1019:[null,345],1119:[325,null],1527:[null,212],1203:[null,330],1475:[null,232],1483:[null,230],1459:[185,null],1255:[null,345],563:[null,685],599:[null,650],379:[555,null],351:[null,580]};
 let o='',prev=null,px=0;
 for(let x=39;x<=1579;x+=4){
  const gap=PX.some(w=>w[2]&&w[0]>px&&w[0]<=x);
  let c=Math.round(at(x)+(r()-.5)*8);
  let op=(prev===null||gap)?c+Math.round(r()*14-7):prev;
  if(Math.abs(c-op)<3)op=c+(r()<.5?-4:4);
  if(OV[x]){const[t,b,f]=OV[x];op=f?t:b;c=f?b:t}
  const top=Math.min(c,op),bot=Math.max(c,op),f=c>op;
  let wt=Math.round(top-1-r()*r()*14),wb=Math.round(bot+1+r()*r()*14);
  if(longs[x]){if(longs[x][0])wt=longs[x][0];if(longs[x][1])wb=longs[x][1]}
  o+=`<path d="M${x+.5} ${wt}V${wb}" stroke="#a6caf0"/>`;
  o+=f?`<rect x="${x-1}" y="${top}" width="4" height="${bot-top+1}" fill="#a6caf0"/>`:`<rect x="${x-1.5}" y="${top+.5}" width="4" height="${bot-top}" fill="#000" stroke="#a6caf0"/>`;
  prev=c;px=x;}
 return o}
const seq=(a,b,st)=>{const o=[];for(let v=a;v<=b+.01;v+=st)o.push(v);return o};
class PriceChart extends HTMLElement{constructor(){super();
const major=[166,246,327,408,488,569,650,731],mids=[125,206,286,368,448,529,610,690];
const yl=[[166,'3700.000'],[247,'3650.000'],[328,'3600.000'],[408,'3550.000'],[489,'3500.000'],[570,'3450.000'],[651,'3400.000'],[731,'3350.000']];
const vm=[303,663,1023,1383];
let g='';
for(const y of major)g+=`<path d="M39 ${y+.5}H1800" stroke="#c8c8c8" stroke-dasharray="1 5"/>`;
for(const y of mids)g+=`<path d="M87 ${y+.5}H1800" stroke="#c8c8c8" stroke-dasharray="1 71"/>`;
for(const x of vm)g+=`<path d="M${x+.5} 117V760" stroke="#c8c8c8" stroke-dasharray="1 15"/>`;
const ticks=seq(118,760,16.1).map(v=>Math.round(v)).map(y=>`<path d="M1804 ${y+.5}H1807" stroke="#fff"/>`).join('');
const gv=['3709.000','3709.000','3709.000','3709.000','3710.000','3710.000','3710.000','3709.000','3709.000','3710.000','3710.000','3709.000','3709.000','3709.000'];
const P=[[82,750],[255,471],[378,632],[578,719],[806,315],[1003,284],[1162,409]];
const tx=(x,y,t,c)=>`<text x="${x}" y="${y}" fill="${c}">${t}</text>`;
const leg=[['OP','3473.000','#a6caf0'],['HI','3477.000','#a6caf0'],['LO','3468.000','#a6caf0'],['CL','3469.000','#a6caf0'],['MA','3518.531','#ff0'],['MA','3484.813','#f0f']];
this.attachShadow({mode:'open'}).innerHTML=`<style>
:host{display:block;height:655px;flex:none;width:1851px;box-sizing:border-box;border-left:1px solid #8a8a8a;background:#000}
svg{display:block}
text{font:bold 16.2px "Liberation Sans",sans-serif}
</style>
<svg width="1850" height="655" viewBox="39 115 1850 655" shape-rendering="crispEdges">
<rect x="39" y="115" width="1850" height="655" fill="#000"/>
${g}
<g>${candles()}</g>
<polyline points="${pts(YEL)}" fill="none" stroke="#ff0" stroke-width="2"/>
<polyline points="${pts(MAG)}" fill="none" stroke="#f0f" stroke-width="2"/>
<path d="M39 522.500H1802M743.500 115V750" stroke="#f00"/>
<rect x="1411" y="115" width="2.500" height="3" fill="#0f0"/><rect x="1434.500" y="115" width="2.500" height="3" fill="#0f0"/>
${P.map(([x,y])=>`<text x="${x}" y="${y+6}" text-anchor="middle" fill="#0f0">P</text>`).join('')}
<text x="1483" y="246" text-anchor="middle" fill="#f00">P</text>
${leg.map((l,i)=>tx(40,130.500+i*19,l[0],l[2])+tx(71,130.500+i*19,l[1],l[2])).join('')}
${gv.map((t,i)=>tx(496+i*87,765,t,'#808080')).join('')}
${tx(1714,765,'3709.000','#fff')}
<rect x="1802" y="115" width="2" height="653" fill="#fff"/>${ticks}
${yl.map(([y,t])=>`<rect x="1804" y="${y}" width="8" height="2" fill="#fff"/>`+tx(1813,y+6,t,'#fff')).join('')}
<rect x="1802" y="513" width="87" height="19" fill="#00f"/><text x="1845" y="528" text-anchor="middle" fill="#fff">3479.385</text>
<rect x="1802" y="768" width="87" height="2" fill="#9a9a9a"/>
<rect x="39" y="768" width="1763" height="2" fill="#b0b0b0"/>
<rect x="1865" y="752" width="23" height="16" fill="#a8a8a8"/>
<g shape-rendering="auto"><path d="M1876.500 754v12M1869 757h15" stroke="#000" stroke-width="1.500"/><path d="M1869 757l-3.500 7h7zM1884 757l-3.500 7h7z" fill="none" stroke="#000"/><path d="M1865.500 764a3.500 3 0 0 0 7 0zM1880.500 764a3.500 3 0 0 0 7 0zM1873 765h7l-2-5h-3z" fill="#ffee20" stroke="#000" stroke-width=".7"/></g><rect x="1867" y="753" width="4" height="3" fill="#0f0"/>
</svg>`}}
class OscChart extends HTMLElement{constructor(){super();
const vm=[303,663,1023,1383],mids=[827,992];let g='';
for(const y of mids)g+=`<path d="M87 ${y+.5}H1800" stroke="#c8c8c8" stroke-dasharray="1 71"/>`;
g+=`<path d="M39 909.500H1796" stroke="#c8c8c8" stroke-dasharray="1 5"/>`;
for(const x of vm)g+=`<path d="M${x+.5} 778V1005" stroke="#c8c8c8" stroke-dasharray="1 15"/>`;
const t=[795,812,827,844,860,877,893,909,926,942,959,975,992].map(y=>`<path d="M1804 ${y+.5}H${y==909?1811:(y==827||y==992)?1808:1806}" stroke="#fff"/>`).join('');
const sm='style="font:11.700px Liberation Sans,sans-serif"';
this.attachShadow({mode:'open'}).innerHTML=`<style>
:host{display:block;height:256px;flex:none;width:1851px;background:#f0f0f0;box-sizing:border-box;border-left:1px solid #8a8a8a}
.top{height:3px;background:linear-gradient(#f6f6f6 0,#f6f6f6 2px,#888 2px)}
svg{display:block}
text{font:bold 16.2px "Liberation Sans",sans-serif}
</style><div class="top"></div>
<svg width="1850" height="253" viewBox="39 773 1850 253" shape-rendering="crispEdges" style="display:block">
<rect x="39" y="773" width="1763" height="234" fill="#000"/><rect x="1802" y="773" width="85" height="253" fill="#000"/>
<rect x="39" y="1007" width="1760" height="19" fill="#f0f0f0"/>
${g}
<path d="M39 873.500H1802" stroke="#0000c8"/><rect x="39" y="946" width="1763" height="2" fill="#0000e0"/>
<polyline points="${pts(CCI)}" fill="none" stroke="#f0f" stroke-width="1.100" shape-rendering="geometricPrecision"/>
<rect x="39" y="775" width="1763" height="2" fill="#f00"/>
<path d="M743.500 777V1007" stroke="#f00"/>
<text x="40" y="790" fill="#fff">CCI 64</text>
<text x="40" y="809" fill="#f0f">CCI</text><text x="79" y="809" fill="#f0f">33</text>
<rect x="1802" y="775" width="86" height="11" fill="#00f"/>
<svg x="1802" y="775" width="86" height="11" viewBox="0 0 86 11"><text x="43" y="8" text-anchor="middle" fill="#fff">403</text></svg>
<rect x="1802" y="786" width="2" height="240" fill="#fff"/>${t}
<text x="1813" y="915" fill="#fff">0</text>
<rect x="1802" y="1026" width="86" height="1" fill="#8a8a8a"/><rect x="1887" y="786" width="1" height="240" fill="#8a8a8a"/>
<g shape-rendering="auto">
<rect x="39" y="1007" width="21" height="19" fill="#f0f0f0" stroke="#777"/><rect x="60" y="1007" width="20" height="19" fill="#f0f0f0" stroke="#777"/>
<path d="M44 1016.500l6-5v10zM74 1016.500l-6-5v10z" fill="#000"/>
<path d="M82 1007l5 19h50l-5-19M142 1026h-5M137 1026h5M137 1007l5 19h53l5-19" fill="none" stroke="#333"/>
<path d="M197 1007l6 19h37l5-19z" fill="#fafafa" stroke="#222"/>
<text x="91" y="1019" ${sm} fill="#333">Osc 5,35</text>
<text x="145" y="1019" ${sm} fill="#333">Osc 16,64</text>
<text x="205" y="1019" ${sm} fill="#333">CCI 64</text>
</g>
<rect x="1799" y="1007" width="1" height="19" fill="#666"/>
</svg>`}}
class DateBar extends HTMLElement{constructor(){super();
const tx=(x,t)=>`<text x="${x}" y="1051" fill="#fff">${t}</text>`;
this.attachShadow({mode:'open'}).innerHTML=`<style>
:host{display:block;height:29px;flex:none;width:1851px;box-sizing:border-box;padding-top:6px;border-left:1px solid #8a8a8a;background:#f0f0f0}
svg{display:block}
text{font:bold 16.5px "Liberation Sans",sans-serif}
</style><svg width="1850" height="23" viewBox="39 1033 1850 23" shape-rendering="crispEdges">
<rect x="39" y="1033" width="1761" height="23" fill="#b8b8b8"/><rect x="39" y="1034" width="1760" height="20" fill="#fff"/><rect x="40" y="1035" width="1759" height="19" fill="#000"/>
${[303,663,1023,1383].map(x=>`<rect x="${x}" y="1035" width="1" height="19" fill="#fff"/>`).join('')}
${tx(305,'07/11/22')}${tx(665,'07')}${tx(1025,'07/25/22')}${tx(1385,'08/01/22')}
<rect x="679" y="1036" width="128" height="17" fill="#00f"/>${tx(682,'07/19/22 - 10:30')}
<rect x="1801" y="1033" width="88" height="23" fill="#00f"/>
</svg>`}}
class StatusBar extends HTMLElement{constructor(){super();this.attachShadow({mode:'open'}).innerHTML=`<style>
:host{display:block;height:22px;box-sizing:border-box;border-top:1px solid #d8d8d8;background:#f0f0f0;flex:none}
.line{height:3px;border-bottom:1px solid #a8a8a8}
.t{padding-left:1435px;padding-top:1px;font:14px "Liberation Sans",sans-serif;color:#222;line-height:17px}
</style><div class="line"></div><div class="t"><slot></slot></div>`}}
customElements.define('app-window',AppWindow);customElements.define('title-bar',TitleBar);customElements.define('menu-bar',MenuBar);customElements.define('tool-btn',ToolBtn);customElements.define('top-toolbar',TopToolbar);customElements.define('side-bar',SideBar);customElements.define('quote-header',QuoteHeader);customElements.define('price-chart',PriceChart);customElements.define('osc-chart',OscChart);customElements.define('date-bar',DateBar);customElements.define('status-bar',StatusBar);
</script></body></html>]]>
